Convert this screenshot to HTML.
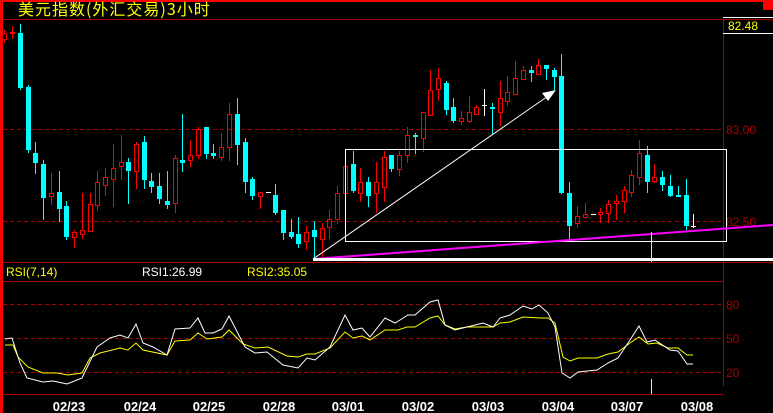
<!DOCTYPE html>
<html><head><meta charset="utf-8"><style>
html,body{margin:0;padding:0;background:#000;width:773px;height:413px;overflow:hidden}
svg{display:block}
text{font-family:"Liberation Sans","WenQuanYi Zen Hei",sans-serif}
</style></head><body>
<svg id="s" width="773" height="413" xmlns="http://www.w3.org/2000/svg" shape-rendering="crispEdges">
<rect width="773" height="413" fill="#000"/>
<rect x="0" y="0" width="773" height="2" fill="#f00"/>
<rect x="763" y="0" width="10" height="10" fill="#f00"/>
<rect x="0" y="0" width="3" height="413" fill="#f00"/>
<text x="18" y="15" font-size="16" letter-spacing="1" fill="#ff0" style="font-family:'WenQuanYi Zen Hei','Noto Sans CJK SC',sans-serif">美元指数(外汇交易)3小时</text>
<line x1="3" y1="19.5" x2="773" y2="19.5" stroke="#a00"/>
<line x1="723.5" y1="19" x2="723.5" y2="386" stroke="#a00"/>
<line x1="723" y1="17.5" x2="773" y2="17.5" stroke="#fff"/>
<line x1="723" y1="33.5" x2="773" y2="33.5" stroke="#fff"/>
<text x="728" y="30" font-size="12" fill="#ff0">82.48</text>
<g stroke="#a00" stroke-dasharray="4,3">
<line x1="3" y1="129.5" x2="723" y2="129.5"/>
<line x1="3" y1="221.5" x2="723" y2="221.5"/>
<line x1="3" y1="304.5" x2="723" y2="304.5"/>
<line x1="3" y1="338.5" x2="723" y2="338.5"/>
<line x1="3" y1="372.5" x2="723" y2="372.5"/>
</g>
<g font-size="12" fill="#a00">
<text x="726" y="134">83.00</text>
<text x="726" y="226">82.50</text>
<text x="726" y="309">80</text>
<text x="726" y="343">50</text>
<text x="726" y="377">20</text>
</g>
<line x1="3" y1="262.5" x2="773" y2="262.5" stroke="#a00"/>
<line x1="3" y1="281.5" x2="723" y2="281.5" stroke="#a00"/>
<line x1="3" y1="394.5" x2="723" y2="394.5" stroke="#a00"/>
<text x="6" y="276" font-size="12" fill="#ff0">RSI(7,14)</text>
<text x="142" y="276" font-size="12" fill="#fff">RSI1:26.99</text>
<text x="247" y="276" font-size="12" fill="#ff0">RSI2:35.05</text>
<g id="c"></g>
<rect x="345.5" y="149.5" width="381" height="92" fill="none" stroke="#fff"/>
<line x1="313" y1="259" x2="551" y2="94" stroke="#fff" shape-rendering="auto"/>
<polygon points="556,90 542,93 548,101" fill="#fff" shape-rendering="auto"/>
<line x1="313" y1="259" x2="773" y2="225" stroke="#f0f" stroke-width="2" shape-rendering="auto"/>
<rect x="313" y="258" width="460" height="3" fill="#fff"/>
<line x1="651.5" y1="232" x2="651.5" y2="262" stroke="#ff0"/>
<line x1="651.5" y1="379" x2="651.5" y2="394" stroke="#ff0"/>
<polyline fill="none" stroke="#ff0" shape-rendering="auto" points="5,345 13,345 18,357 28,367 43,373 57,373 68,375 82,373 90,358 100,353 120,348 128,350 136,343 143,350 167,355 175,341 190,340 198,333 207,339 222,337 229,330 243,344 255,348 268,347 287,356 298,357 307,354 315,354 330,348 345,332 353,338 362,336 370,340 385,330 398,330 407,327 415,327 430,318 438,316 445,325 455,329 467,327 493,327 500,323 510,322 523,317 540,318 548,318 555,323 563,357 570,361 578,358 597,358 608,354 618,352 630,343 639,337 648,344 657,343 668,348 678,348 687,355 693,355"/>
<polyline fill="none" stroke="#fff" shape-rendering="auto" points="5,339 12,338 20,363 27,378 43,382 53,381 67,384 82,378 97,347 110,338 120,335 128,338 136,324 143,343 153,347 167,355 175,329 190,328 198,318 205,333 213,333 222,329 229,316 245,347 255,353 267,352 283,365 298,368 307,358 315,360 330,347 345,315 353,330 362,328 370,337 385,318 395,323 400,320 408,315 415,315 430,302 438,300 445,325 455,330 467,327 483,323 493,327 500,318 510,315 523,306 532,309 539,305 548,313 555,327 562,373 570,378 578,372 597,370 608,363 618,358 630,340 639,326 647,342 655,340 670,350 678,351 687,364 693,364"/>
<g font-size="13" font-weight="bold" fill="#fff" text-anchor="middle" style="font-family:'Liberation Mono',monospace">
<text x="69" y="411">02/23</text><text x="140" y="411">02/24</text><text x="209" y="411">02/25</text><text x="279" y="411">02/28</text><text x="348" y="411">03/01</text><text x="418" y="411">03/02</text><text x="488" y="411">03/03</text><text x="558" y="411">03/04</text><text x="627" y="411">03/07</text><text x="697" y="411">03/08</text>
</g>
</svg>
<script>
var d=[[4,33,39,30,43,'r'],[12,32,33,26,39,'r'],[20,33,88,24,90,'c'],[28,87,150,85,153,'c'],[35,153,163,142,174,'c'],[43,164,198,160,220,'c'],[51,193,196,173,205,'r'],[59,192,209,171,222,'c'],[66,206,237,201,240,'c'],[74,232,237,230,248,'r'],[82,230,234,193,239,'r'],[90,204,231,193,231,'r'],[97,182,205,171,211,'r'],[105,177,185,168,196,'r'],[113,168,179,144,207,'r'],[121,162,166,135,180,'r'],[128,162,171,158,204,'c'],[136,144,171,142,189,'r'],[144,142,180,136,189,'c'],[151,181,187,173,193,'c'],[159,186,199,173,204,'c'],[167,201,205,171,209,'c'],[175,158,203,155,213,'r'],[182,160,163,114,172,'c'],[190,155,160,140,167,'r'],[198,129,155,127,159,'r'],[206,127,154,127,159,'c'],[213,153,156,144,159,'c'],[221,147,157,133,161,'r'],[229,114,147,103,161,'r'],[237,114,145,98,165,'c'],[245,142,182,138,193,'c'],[252,179,196,177,200,'c'],[260,192,196,192,209,'r'],[268,192,192,192,192,'w'],[275,195,213,184,215,'c'],[283,210,233,210,240,'c'],[291,232,237,219,239,'c'],[298,234,244,217,248,'c'],[306,232,241,226,250,'r'],[314,230,237,221,260,'c'],[322,228,239,223,257,'r'],[329,219,227,210,239,'r'],[337,193,219,186,224,'r'],[345,166,193,166,193,'r'],[353,164,191,151,193,'c'],[360,182,193,168,202,'r'],[368,182,196,177,207,'c'],[376,182,193,162,213,'r'],[384,157,187,151,202,'r'],[391,155,169,155,172,'c'],[399,155,169,151,176,'r'],[407,135,155,127,163,'r'],[415,135,137,133,154,'c'],[423,112,138,112,152,'r'],[430,90,115,70,115,'r'],[438,78,89,68,101,'r'],[446,83,110,81,115,'c'],[453,107,121,98,123,'c'],[461,118,121,111,125,'r'],[469,112,121,96,123,'r'],[476,107,114,105,115,'r'],[484,105,105,89,115,'w'],[492,107,109,103,134,'c'],[500,98,112,81,126,'r'],[507,92,101,76,106,'r'],[515,78,94,61,94,'r'],[523,70,79,66,80,'r'],[531,70,73,66,82,'c'],[538,65,74,59,75,'r'],[546,65,69,65,80,'c'],[554,70,77,68,90,'c'],[561,76,193,54,194,'c'],[569,193,226,182,239,'c'],[577,216,223,206,228,'r'],[585,214,217,203,219,'r'],[593,214,214,214,214,'w'],[600,212,214,208,223,'r'],[608,204,213,200,223,'r'],[616,201,203,195,220,'r'],[624,190,201,186,213,'r'],[631,175,192,170,197,'r'],[639,153,177,140,185,'r'],[647,155,182,146,193,'c'],[654,177,181,164,183,'r'],[662,177,185,171,191,'c'],[670,186,196,175,197,'c'],[678,195,197,186,197,'c'],[686,195,226,179,230,'c'],[693,226,226,214,227,'w']];
var s='';
d.forEach(function(a){var x=a[0],t=a[1],b=a[2],h=a[3],l=a[4],k=a[5];
if(k=='c'){s+='<line x1="'+(x+.5)+'" y1="'+h+'" x2="'+(x+.5)+'" y2="'+l+'" stroke="#0ff"/><rect x="'+(x-2)+'" y="'+t+'" width="5" height="'+Math.max(2,b-t)+'" fill="#0ff"/>';}
else if(k=='r'){s+='<line x1="'+(x+.5)+'" y1="'+h+'" x2="'+(x+.5)+'" y2="'+t+'" stroke="#f00"/><line x1="'+(x+.5)+'" y1="'+b+'" x2="'+(x+.5)+'" y2="'+l+'" stroke="#f00"/><rect x="'+(x-1.5)+'" y="'+(t+.5)+'" width="4" height="'+Math.max(1,b-t)+'" fill="none" stroke="#f00"/>';}
else{s+='<line x1="'+(x+.5)+'" y1="'+h+'" x2="'+(x+.5)+'" y2="'+(l+1)+'" stroke="#fff"/><line x1="'+(x-2)+'" y1="'+(t+.5)+'" x2="'+(x+3)+'" y2="'+(t+.5)+'" stroke="#fff"/>';}
});
document.getElementById('c').innerHTML=s;
</script>
</body></html>
